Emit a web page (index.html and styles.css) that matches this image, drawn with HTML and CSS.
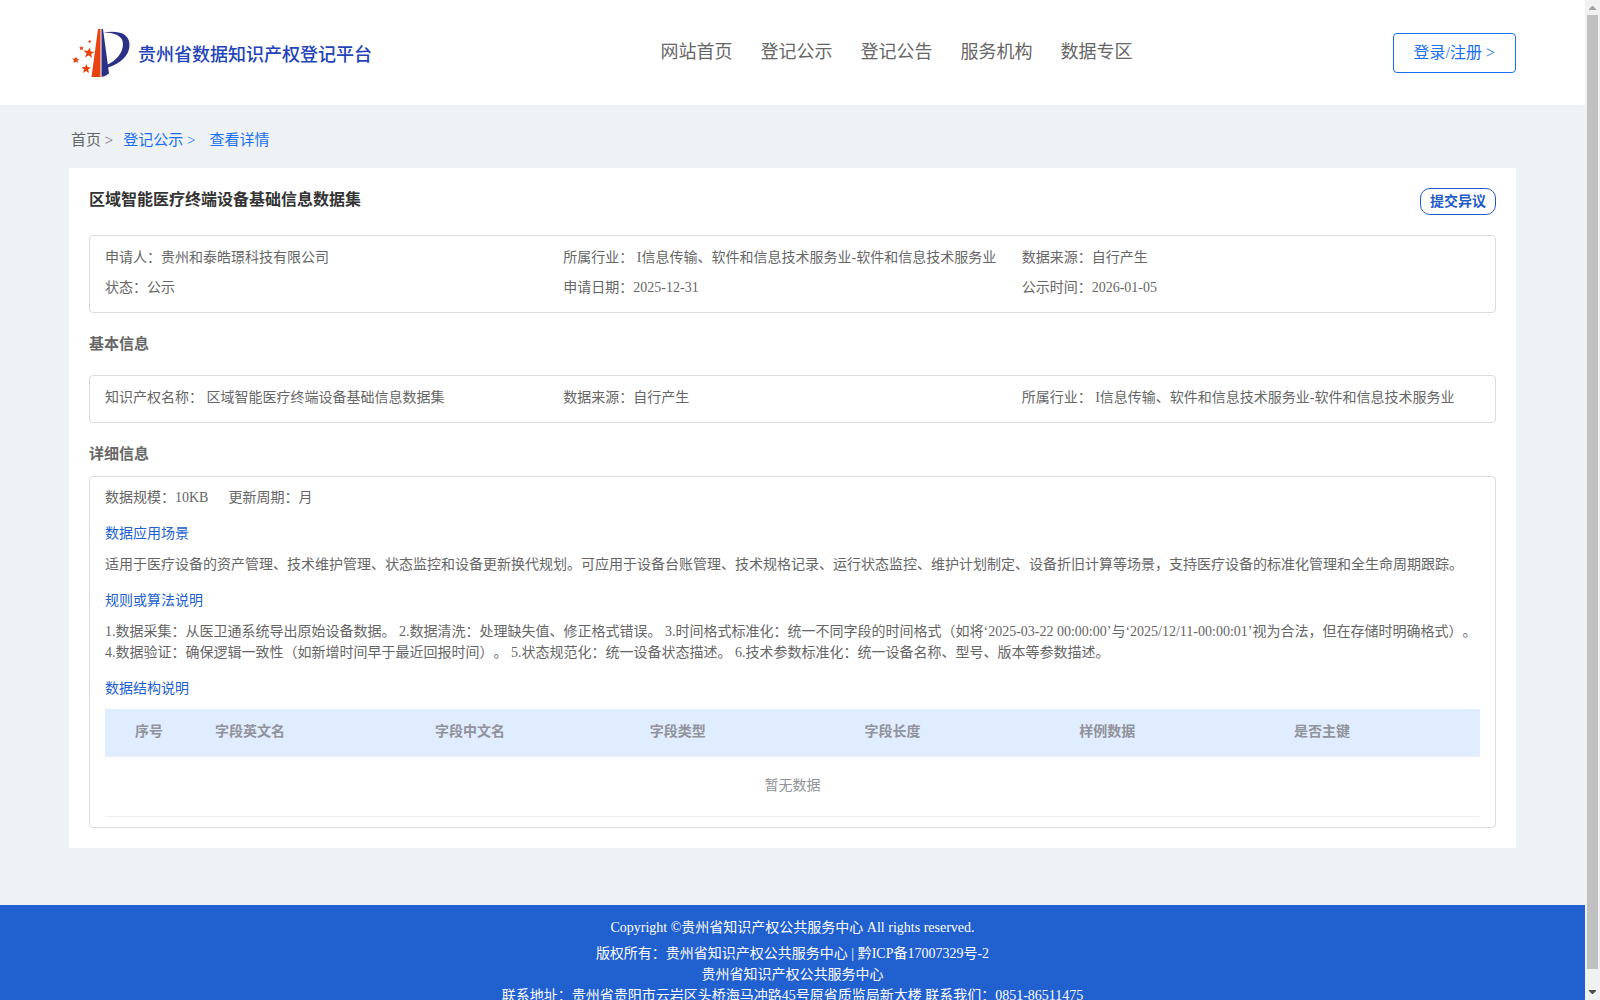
FILE: index.html
```html
<!DOCTYPE html>
<html lang="zh-CN">
<head>
  <meta charset="UTF-8">
  <meta name="viewport" content="width=device-width, initial-scale=1">
  <title>贵州省数据知识产权登记平台</title>
  <link rel="stylesheet" href="styles.css">
</head>
<body>
<header class="header">
  <a class="brand" href="#">
    <svg class="brand-logo" width="60" height="50" viewBox="0 0 60 50" aria-hidden="true">
      <path fill="#e8430f" d="M26 1L28.500 1V49H19.500Z"/>
      <path fill="#2b3187" d="M29.500 1H31L37 45.500Q34 48 29.500 49Z"/>
      <path fill="#2b3187" d="M31.500 4.500C44 2.500 57.500 4 57.500 17C57.500 28 47.500 36 36 39.500L35.500 36.500C44 33 51 25 51 16C51 7.500 42 4.500 31.500 4.500Z"/>
      <g fill="#e8430f">
        <path d="M18 19.500L18.700 23.500L22.500 24L19.200 26L20 30L16.800 27.300L13 29.500L14.500 25.500L11.500 22.500L15.700 22.800Z"/>
        <path d="M14.500 36L15.500 39L19 39.500L16.200 41.500L17 45L14 43L11 45L12 41.500L9.500 39L13 39Z"/>
        <path d="M4 28.500L4.800 30.800L7.500 31L5.500 32.500L6 35L4 33.700L1.300 35L2 32.300L0 30.500L3 30.500Z"/>
        <path d="M9 18L10 19.200L11.500 19L10.700 20.500L11 22L9.500 21.500L8 22L8.200 20.500L7.200 19.200L8.600 19.200Z"/>
        <path d="M17.500 12L18.200 12.800L19.300 13L18.500 14L18.500 15L17.500 14.500L16.500 14.800L16.700 13.800L16 13L17 12.800Z"/>
      </g>
    </svg>
    <span class="brand-name">贵州省数据知识产权登记平台</span>
  </a>
  <nav class="nav">
    <a href="#">网站首页</a>
    <a href="#">登记公示</a>
    <a href="#">登记公告</a>
    <a href="#">服务机构</a>
    <a href="#">数据专区</a>
  </nav>
  <button class="login-btn" type="button">登录/注册 &gt;</button>
</header>

<main class="main">
  <nav class="breadcrumb">
    <a class="home" href="#">首页 &gt;</a>
    <a href="#">登记公示 &gt;</a>
    <a class="current" href="#">查看详情</a>
  </nav>

  <section class="card">
    <div class="card-head">
      <h1>区域智能医疗终端设备基础信息数据集</h1>
      <button class="objection-btn" type="button">提交异议</button>
    </div>

    <div class="box info-grid">
      <div>申请人：贵州和泰皓璟科技有限公司</div>
      <div>所属行业： I信息传输、软件和信息技术服务业-软件和信息技术服务业</div>
      <div>数据来源：自行产生</div>
      <div>状态：公示</div>
      <div>申请日期：2025-12-31</div>
      <div>公示时间：2026-01-05</div>
    </div>

    <h2>基本信息</h2>
    <div class="box info-grid">
      <div>知识产权名称： 区域智能医疗终端设备基础信息数据集</div>
      <div>数据来源：自行产生</div>
      <div>所属行业： I信息传输、软件和信息技术服务业-软件和信息技术服务业</div>
    </div>

    <h2 class="detail-title">详细信息</h2>
    <div class="box detail">
      <div class="scale">
        <span>数据规模：10KB</span>
        <span>更新周期：月</span>
      </div>
      <h3>数据应用场景</h3>
      <p>适用于医疗设备的资产管理、技术维护管理、状态监控和设备更新换代规划。可应用于设备台账管理、技术规格记录、运行状态监控、维护计划制定、设备折旧计算等场景，支持医疗设备的标准化管理和全生命周期跟踪。</p>
      <h3>规则或算法说明</h3>
      <p>1.数据采集：从医卫通系统导出原始设备数据。 2.数据清洗：处理缺失值、修正格式错误。 3.时间格式标准化：统一不同字段的时间格式（如将‘2025-03-22 00:00:00’与‘2025/12/11-00:00:01’视为合法，但在存储时明确格式）。 4.数据验证：确保逻辑一致性（如新增时间早于最近回报时间）。 5.状态规范化：统一设备状态描述。 6.技术参数标准化：统一设备名称、型号、版本等参数描述。</p>
      <h3>数据结构说明</h3>
      <table class="fields">
        <thead>
          <tr>
            <th class="col-index">序号</th>
            <th class="col-en">字段英文名</th>
            <th>字段中文名</th>
            <th>字段类型</th>
            <th>字段长度</th>
            <th>样例数据</th>
            <th class="col-key">是否主键</th>
          </tr>
        </thead>
        <tbody>
          <tr>
            <td class="empty" colspan="7">暂无数据</td>
          </tr>
        </tbody>
      </table>
    </div>
  </section>
</main>

<footer class="footer">
  <p class="copyright">Copyright ©贵州省知识产权公共服务中心 All rights reserved.</p>
  <p>版权所有：贵州省知识产权公共服务中心 | 黔ICP备17007329号-2</p>
  <p>贵州省知识产权公共服务中心</p>
  <p>联系地址：贵州省贵阳市云岩区头桥海马冲路45号原省质监局新大楼 联系我们：0851-86511475</p>
</footer>

<div class="scrollbar" aria-hidden="true">
  <svg class="scroll-arrow" width="15" height="15" viewBox="0 0 15 15"><path fill="#a3a3a3" d="M4 10V9L7 6H8L11 9V10Z"/></svg>
  <div class="scroll-track"><div class="scroll-thumb"></div></div>
  <svg class="scroll-arrow" width="15" height="15" viewBox="0 0 15 15"><path fill="#505050" d="M4 5V6L7 9H8L11 6V5Z"/></svg>
</div>
</body>
</html>
```
FILE: styles.css
```css
* {
  box-sizing: border-box;
}
html {
  scrollbar-width: none;
}
body {
  margin: 0;
  padding-right: 15px;
  background: #eef2f5;
  color: #666;
  font-family: "Liberation Serif", "Noto Sans CJK SC", serif;
  font-size: 14px;
  line-height: 21px;
  text-spacing-trim: space-all;
}
a {
  color: inherit;
  text-decoration: none;
}
h1, h2, h3, p {
  margin: 0;
}
button {
  background: #fff;
  font-family: inherit;
  cursor: pointer;
}

/* header */
.header {
  display: grid;
  grid-template-columns: 1fr auto 1fr;
  align-items: center;
  height: 105px;
  padding: 0 69px;
  background: #fff;
}
.brand {
  display: flex;
  align-items: center;
  gap: 6px;
  padding-left: 3px;
}
.brand-name {
  padding-top: 5px;
  color: #2343b8;
  font-size: 18px;
  font-weight: 500;
}
.nav {
  display: flex;
  gap: 28px;
  padding-left: 208px;
  font-size: 18px;
}
.login-btn {
  justify-self: end;
  height: 40px;
  padding: 0 20px 3px;
  border: 1px solid #1a6ff0;
  border-radius: 4px;
  color: #1a6ff0;
  font-size: 16px;
}

/* content */
.main {
  padding: 25px 69px 57px;
}
.breadcrumb {
  display: flex;
  gap: 10px;
  padding: 0 2px 17px;
  color: #1a6ff0;
  font-size: 15px;
}
.breadcrumb .home {
  color: #666;
}
.breadcrumb .current {
  padding-left: 4px;
}
.card {
  padding: 20px;
  background: #fff;
}
.card-head {
  display: flex;
  justify-content: space-between;
  align-items: flex-start;
  height: 47px;
}
h1 {
  color: #333;
  font-size: 16px;
  line-height: 23px;
}
.objection-btn {
  height: 27px;
  padding: 0 9px 3px;
  border: 1px solid #1f5cc8;
  border-radius: 10px;
  color: #1f5cc8;
  font-size: 14px;
  font-weight: bold;
}
.box {
  padding: 11px 15px 14px;
  border: 1px solid #dcdcdc;
  border-radius: 4px;
}
.info-grid {
  display: grid;
  grid-template-columns: repeat(3, 1fr);
  row-gap: 9px;
  white-space: nowrap;
}
h2 {
  padding: 21px 0 20px;
  font-size: 15px;
}
.detail-title {
  padding-bottom: 11px;
}
.detail {
  padding: 10px 15px;
}
.scale {
  display: flex;
  gap: 20px;
}
h3 {
  padding: 15px 0 10px;
  color: #205fcf;
  font-size: 14px;
  font-weight: normal;
}

/* field table */
.fields {
  width: 100%;
  border-collapse: collapse;
  table-layout: fixed;
  color: #909399;
}
.fields th {
  height: 47px;
  padding: 0 10px 2px;
  background: #e0ecff;
  border-bottom: 1px solid #ebeef5;
  text-align: left;
}
.fields .col-index {
  width: 100px;
  padding-left: 30px;
}
.fields .col-en {
  width: 16%;
}
.fields .col-key {
  width: 196px;
}
.fields .empty {
  height: 60px;
  padding: 0 0 2px;
  border-bottom: 1px solid #ebeef5;
  text-align: center;
}

/* footer */
.footer {
  padding: 12px 20px;
  background: #2160cf;
  color: #fff;
  text-align: center;
}
.footer .copyright {
  padding-bottom: 5px;
}

/* page scrollbar */
.scrollbar {
  position: fixed;
  top: 0;
  right: 0;
  bottom: 0;
  display: flex;
  flex-direction: column;
  width: 15px;
  background: #f1f1f1;
}
.scroll-arrow {
  display: block;
}
.scroll-track {
  flex: 1;
  padding: 0 2px;
}
.scroll-thumb {
  height: 98.4%;
  background: #c1c1c1;
}
```
